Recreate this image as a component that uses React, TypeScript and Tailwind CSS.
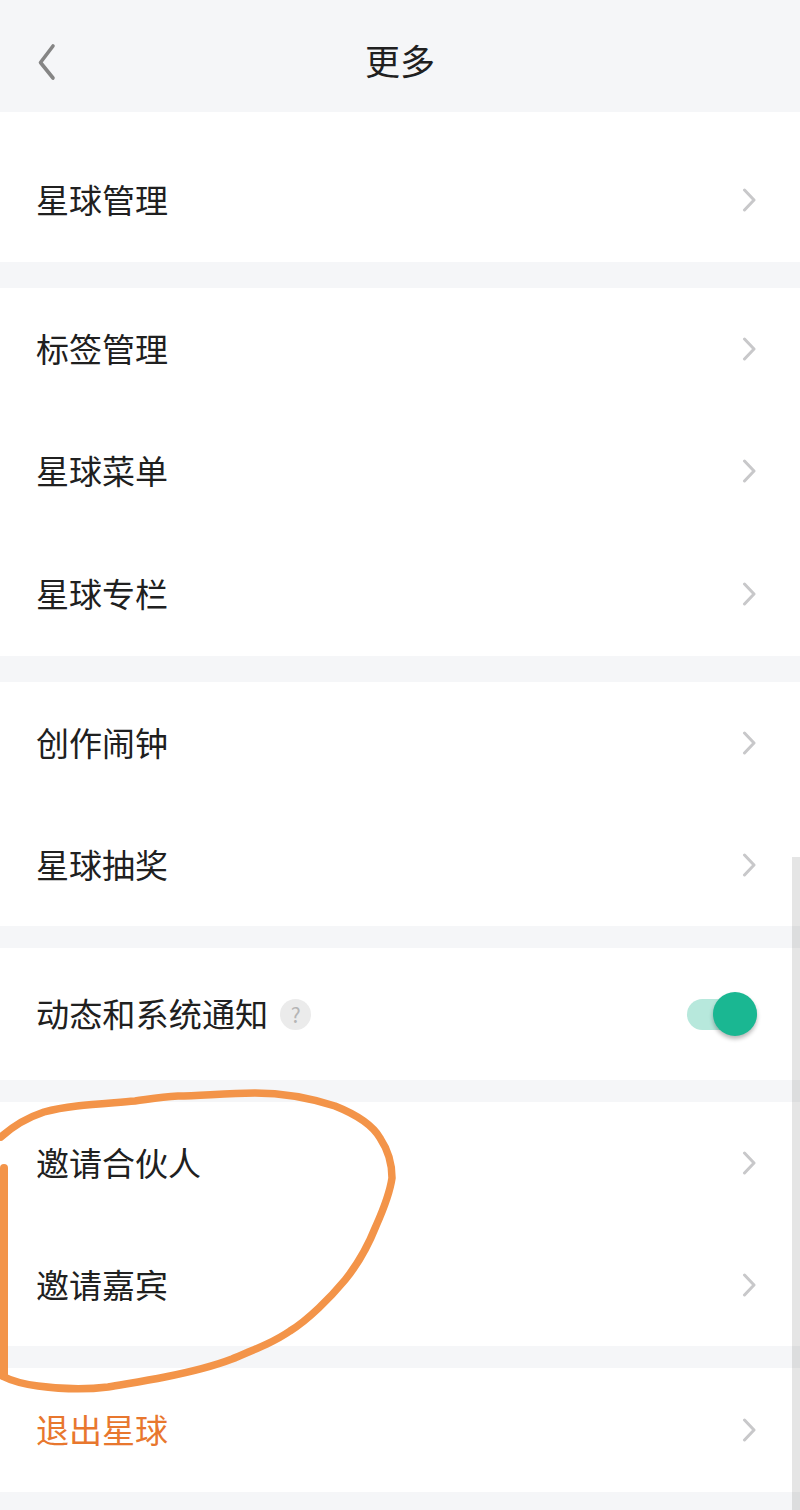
const fontStack = { fontFamily: '"Noto Sans CJK SC", "Noto Sans", sans-serif' }

function Chevron() {
  return (
    <svg className="h-[26px] w-[16px] shrink-0" viewBox="0 0 16 26" fill="none">
      <path d="M4.5 3 L14 13 L4.5 23" stroke="#c8c8ca" strokeWidth="3" strokeLinecap="round" strokeLinejoin="round" />
    </svg>
  )
}

function Row({ label, className = 'h-[122px]', textClass = 'text-[#202020]' }: { label: string; className?: string; textClass?: string }) {
  return (
    <div className={`flex items-center justify-between pl-[36px] pr-[44px] ${className}`}>
      <span className={`pb-[2px] text-[33px] leading-none ${textClass}`}>{label}</span>
      <Chevron />
    </div>
  )
}

export default function App() {
  return (
    <div className="relative h-[1510px] w-[800px] overflow-hidden bg-[#f5f6f8]" style={fontStack}>
      <header className="relative flex h-[112px] items-center justify-center pt-[6px]">
        <svg className="absolute left-[37px] top-[43px] h-[38px] w-[20px]" viewBox="0 0 20 38" fill="none">
          <path d="M16 3 L3.5 19.5 L16 35" stroke="#858585" strokeWidth="3.6" strokeLinecap="round" strokeLinejoin="round" />
        </svg>
        <h1 className="text-[35px] font-normal leading-none text-[#202020]">更多</h1>
      </header>

      <section className="bg-white pt-[26px]">
        <Row label="星球管理" className="h-[124px]" />
      </section>

      <section className="mt-[26px] bg-white">
        <Row label="标签管理" />
        <Row label="星球菜单" />
        <Row label="星球专栏" className="h-[124px]" />
      </section>

      <section className="mt-[26px] bg-white">
        <Row label="创作闹钟" />
        <Row label="星球抽奖" />
      </section>

      <section className="mt-[22px] flex h-[132px] items-center justify-between bg-white pl-[36px] pr-[43px]">
        <div className="flex items-center gap-[12px]">
          <span className="pb-[2px] text-[33.2px] leading-none text-[#202020]">动态和系统通知</span>
          <span className="mt-[2px] flex h-[31px] w-[31px] items-center justify-center rounded-full bg-[#ebebeb] text-[21px] leading-none text-[#b5b5b5]">?</span>
        </div>
        <div className="relative h-[31px] w-[70px] rounded-full bg-[#b7e8dc]">
          <div className="absolute right-0 top-[-7px] h-[44px] w-[44px] rounded-full bg-[#1ab792] shadow-[0_3px_4px_rgba(0,0,0,0.28)]" />
        </div>
      </section>

      <section className="mt-[22px] bg-white">
        <Row label="邀请合伙人" />
        <Row label="邀请嘉宾" />
      </section>

      <section className="mt-[22px] bg-white">
        <Row label="退出星球" className="h-[124px]" textClass="text-[#e8772e]" />
      </section>

      {/* scrollbar */}
      <div className="absolute bottom-0 right-0 top-[857px] w-[8px] bg-black/10" />

      {/* hand drawn circle on top of the screenshot */}
      <svg className="absolute left-0 top-0 h-[1510px] w-[800px]" viewBox="0 0 800 1510" fill="none">
        <path
          d="M1 1137 C12 1127 26 1118 44 1112 C70 1105 100 1104 135 1101 C150 1099 160 1097 178 1096 C200 1096 225 1093 255 1093 C285 1093 310 1098 335 1106 C355 1114 372 1124 380 1138 C388 1150 392 1165 392 1178 C390 1192 384 1208 376 1226 C368 1246 358 1264 345 1280 C330 1298 308 1320 290 1331 C274 1342 256 1349 232 1359 C214 1366 195 1371 165 1377 C145 1381 125 1384 108 1387 C85 1390 60 1389 38 1386 C22 1384 12 1381 2 1376"
          stroke="#f39449"
          strokeWidth="7.5"
          strokeLinecap="round"
          strokeLinejoin="round"
        />
        <path d="M4 1168 L4 1376" stroke="#f39449" strokeWidth="8" strokeLinecap="round" />
      </svg>
    </div>
  )
}
